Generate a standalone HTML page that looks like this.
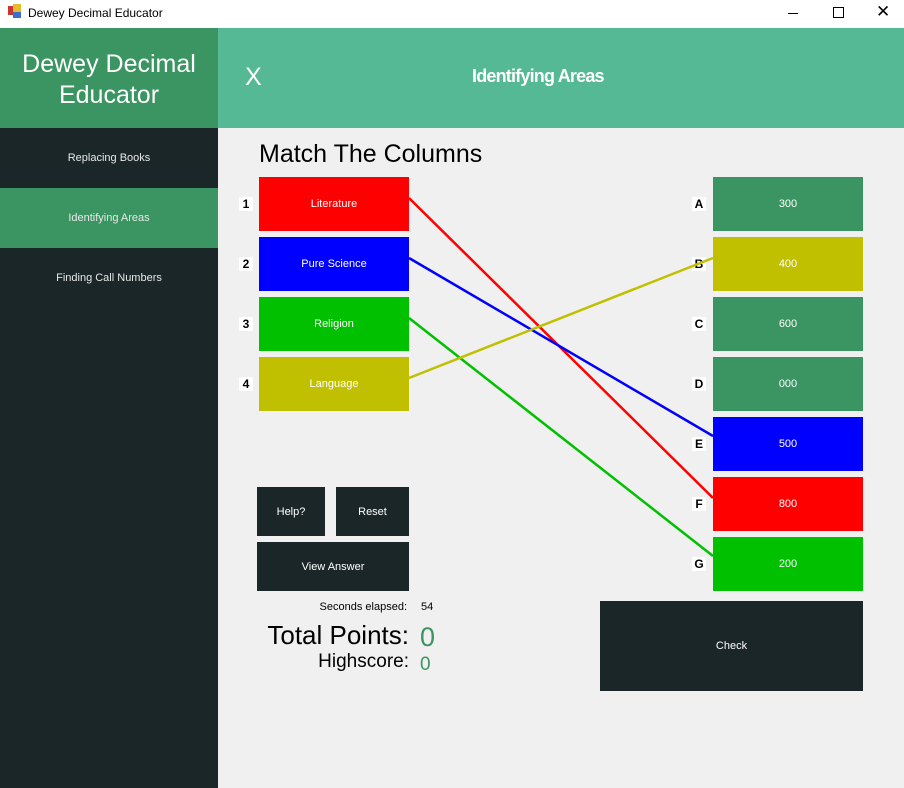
<!DOCTYPE html>
<html><head><style>
*{margin:0;padding:0;box-sizing:border-box}
body{width:904px;height:788px;background:#f0f0f0;font-family:"Liberation Sans",sans-serif;position:relative;overflow:hidden;font-size:11px}
.a{position:absolute}
.box{position:absolute;width:150px;height:54px;color:#fff;display:flex;align-items:center;justify-content:center;font-size:11px}
.btn{position:absolute;background:#1b2629;color:#fff;display:flex;align-items:center;justify-content:center;font-size:11px}
.lab{position:absolute;width:14px;height:14px;background:#fff;font-weight:bold;font-size:12px;text-align:center;line-height:14px}
.nav{position:absolute;left:0;width:218px;height:60px;color:#e8e8e8;display:flex;align-items:center;justify-content:center;font-size:11px}
</style></head><body>
<div class="a" style="left:0;top:0;width:904px;height:28px;background:#fff"></div>
<div class="a" style="left:8px;top:6px;width:7px;height:9px;background:#c33"></div>
<div class="a" style="left:13px;top:4px;width:8px;height:8px;background:#e8b830"></div>
<div class="a" style="left:13px;top:12px;width:8px;height:6px;background:#3a6fd0"></div>
<div class="a" style="left:28px;top:6px;font-size:12px">Dewey Decimal Educator</div>
<div class="a" style="left:788px;top:13px;width:10px;height:1px;background:#000"></div>
<div class="a" style="left:833px;top:7px;width:11px;height:11px;border:1px solid #000"></div>
<div class="a" style="left:876px;top:2px;font-size:17px">✕</div>
<div class="a" style="left:0;top:28px;width:218px;height:760px;background:#1b2629"></div>
<div class="a" style="left:0;top:28px;width:218px;height:100px;background:#3a9562;color:#fff;font-size:25px;text-align:center;padding-top:21px;line-height:31px">Dewey Decimal<br>Educator</div>
<div class="a" style="left:218px;top:28px;width:686px;height:100px;background:#55b996"></div>
<div class="a" style="left:245px;top:63px;color:#fff;font-size:25px">X</div>
<div class="a" style="left:472px;top:66px;color:#fff;font-size:18px;font-weight:bold;letter-spacing:-0.8px">Identifying Areas</div>
<div class="nav" style="top:128px">Replacing Books</div>
<div class="nav" style="top:188px;background:#3a9562">Identifying Areas</div>
<div class="nav" style="top:248px">Finding Call Numbers</div>
<div class="a" style="left:259px;top:140px;font-size:25px">Match The Columns</div>
<div class="box" style="left:259px;top:177px;background:#f00">Literature</div>
<div class="box" style="left:259px;top:237px;background:#00f">Pure Science</div>
<div class="box" style="left:259px;top:297px;background:#00c000">Religion</div>
<div class="box" style="left:259px;top:357px;background:#c0c000">Language</div>
<div class="lab" style="left:239px;top:197px">1</div>
<div class="lab" style="left:239px;top:257px">2</div>
<div class="lab" style="left:239px;top:317px">3</div>
<div class="lab" style="left:239px;top:377px">4</div>
<div class="box" style="left:713px;top:177px;background:#3a9562">300</div>
<div class="box" style="left:713px;top:237px;background:#c0c000">400</div>
<div class="box" style="left:713px;top:297px;background:#3a9562">600</div>
<div class="box" style="left:713px;top:357px;background:#3a9562">000</div>
<div class="box" style="left:713px;top:417px;background:#00f">500</div>
<div class="box" style="left:713px;top:477px;background:#f00">800</div>
<div class="box" style="left:713px;top:537px;background:#00c000">200</div>
<div class="lab" style="left:692px;top:197px">A</div>
<div class="lab" style="left:692px;top:257px">B</div>
<div class="lab" style="left:692px;top:317px">C</div>
<div class="lab" style="left:692px;top:377px">D</div>
<div class="lab" style="left:692px;top:437px">E</div>
<div class="lab" style="left:692px;top:497px">F</div>
<div class="lab" style="left:692px;top:557px">G</div>
<svg class="a" style="left:0;top:0" width="904" height="788">
<line x1="409" y1="198" x2="713" y2="498" stroke="#f00" stroke-width="2.5"/>
<line x1="409" y1="258" x2="713" y2="436" stroke="#00f" stroke-width="2.5"/>
<line x1="409" y1="318" x2="713" y2="556" stroke="#00c000" stroke-width="2.5"/>
<line x1="409" y1="378" x2="713" y2="258" stroke="#c0c000" stroke-width="2.5"/>
</svg>
<div class="btn" style="left:257px;top:487px;width:68px;height:49px">Help?</div>
<div class="btn" style="left:336px;top:487px;width:73px;height:49px">Reset</div>
<div class="btn" style="left:257px;top:542px;width:152px;height:49px">View Answer</div>
<div class="btn" style="left:600px;top:601px;width:263px;height:90px">Check</div>
<div class="a" style="left:250px;top:601px;width:157px;text-align:right;font-size:11px">Seconds elapsed:</div>
<div class="a" style="left:421px;top:601px;font-size:11px">54</div>
<div class="a" style="left:200px;top:620px;width:209px;text-align:right;font-size:26px">Total Points:</div>
<div class="a" style="left:420px;top:622px;font-size:27px;color:#3a9562">0</div>
<div class="a" style="left:200px;top:651px;width:209px;text-align:right;font-size:19px">Highscore:</div>
<div class="a" style="left:420px;top:654px;font-size:19px;color:#3a9562">0</div>
</body></html>
